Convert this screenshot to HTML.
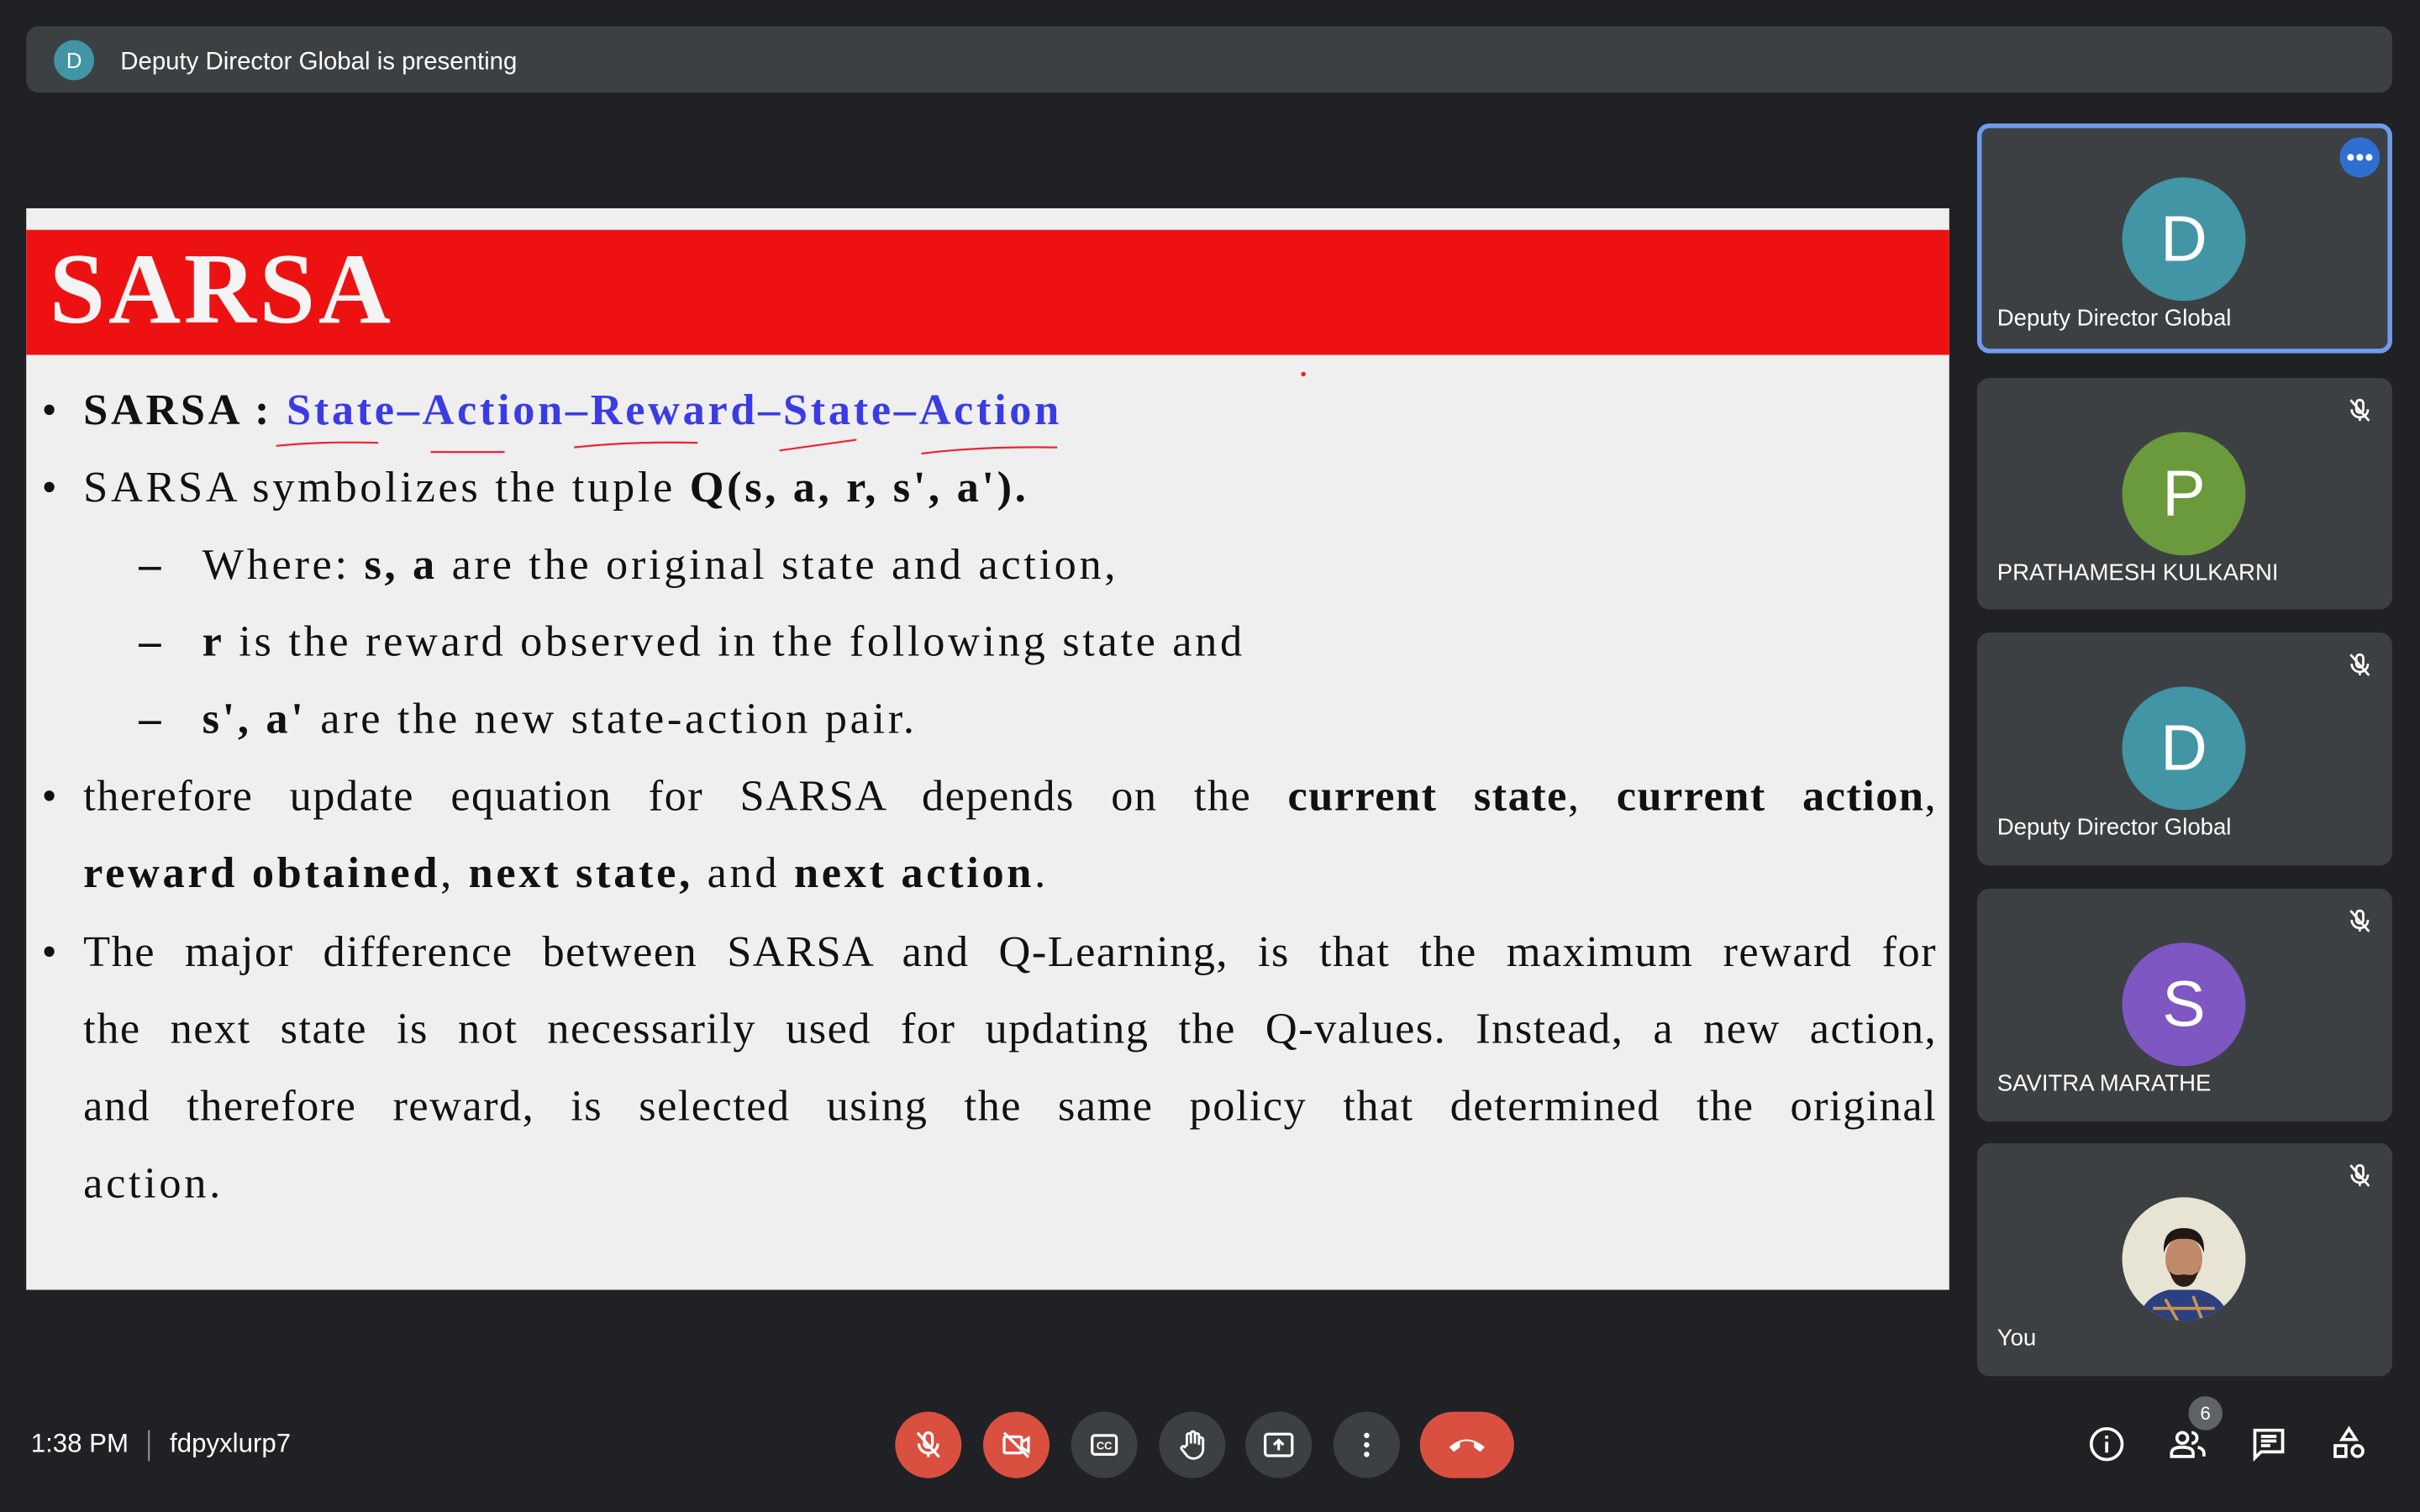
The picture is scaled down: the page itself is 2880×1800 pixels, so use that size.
<!DOCTYPE html>
<html><head><meta charset="utf-8"><style>
html,body{margin:0;padding:0;background:#202124;overflow:hidden}
#w{position:absolute;left:0;top:0;width:1568px;height:980px;transform:scale(1.836735);transform-origin:0 0;background:#202124;font-family:"Liberation Sans",sans-serif;color:#fff}
.abs{position:absolute}
.top{left:17px;top:17px;width:1533px;height:43px;background:#3c4043;border-radius:8px}
.slide{left:17px;top:135px;width:1246px;height:701px;background:#efefef}
.red{left:0;top:14px;width:1246px;height:81px;background:#ee1111}
.ttl{left:15px;top:7px;font-family:"Liberation Serif",serif;font-weight:900;font-size:65px;color:#f4f4f4;letter-spacing:2px;line-height:65px}
.ln{position:absolute;font-family:"Liberation Serif",serif;font-size:28.5px;line-height:30px;color:#111;letter-spacing:2px;white-space:nowrap}
.j{width:1201px;text-align:justify;text-align-last:justify;white-space:normal;letter-spacing:0.8px}
.bul{position:absolute;font-size:28px;line-height:30px;color:#111;font-family:"Liberation Serif",serif}
b{font-weight:900}
.tile{position:absolute;left:1281px;width:269px;background:#3c4043;border-radius:8px}
.av{position:absolute;left:94px;width:80px;height:80px;border-radius:50%;color:#fff;font-size:42px;text-align:center;line-height:80px}
.nm{position:absolute;left:13px;font-size:15px;color:#fff}
.mute{position:absolute;right:12px;top:12px}
.btn{position:absolute;top:915px;width:43px;height:43px;border-radius:50%;background:#3c4043}
.btn svg{position:absolute;left:11px;top:11px}
</style></head><body><div id="w">
<div class="abs top">
 <div class="abs" style="left:18px;top:9px;width:26px;height:26px;border-radius:50%;background:#4195a5;font-size:14px;line-height:26px;text-align:center">D</div>
 <div class="abs" style="left:61px;top:15px;font-size:16px">Deputy Director Global is presenting</div>
</div>

<div class="abs slide">
 <div class="abs red"><div class="abs ttl">SARSA</div></div>
 <div class="bul" style="left:10px;top:117px">•</div>
 <div class="ln" style="left:37px;top:117px"><b>SARSA : <span style="color:#3b3be6">State–Action–Reward–State–Action</span></b></div>
 <svg class="abs" style="left:150px;top:146px" width="540" height="16"><g stroke="#e23" stroke-width="1.2" fill="none"><path d="M12 8 Q40 5 78 6"/><path d="M112 12 L160 12"/><path d="M205 9 Q240 5 285 6"/><path d="M338 11 Q360 8 388 4"/><path d="M430 13 Q470 8 518 9"/></g></svg>
 <div class="bul" style="left:10px;top:167px">•</div>
 <div class="ln" style="left:37px;top:167px">SARSA symbolizes the tuple <b>Q(s, a, r, s', a').</b></div>
 <div class="ln" style="left:73px;top:217px"><b>–</b></div>
 <div class="ln" style="left:114px;top:217px">Where: <b>s, a</b> are the original state and action,</div>
 <div class="ln" style="left:73px;top:267px"><b>–</b></div>
 <div class="ln" style="left:114px;top:267px"><b>r</b> is the reward observed in the following state and</div>
 <div class="ln" style="left:73px;top:317px"><b>–</b></div>
 <div class="ln" style="left:114px;top:317px"><b>s', a'</b> are the new state-action pair.</div>
 <div class="bul" style="left:10px;top:367px">•</div>
 <div class="ln j" style="left:37px;top:367px">therefore update equation for SARSA depends on the <b>current state</b>, <b>current action</b>,</div>
 <div class="ln" style="left:37px;top:417px"><b>reward obtained</b>, <b>next state,</b> and <b>next action</b>.</div>
 <div class="bul" style="left:10px;top:468px">•</div>
 <div class="ln j" style="left:37px;top:468px">The major difference between SARSA and Q-Learning, is that the maximum reward for</div>
 <div class="ln j" style="left:37px;top:518px">the next state is not necessarily used for updating the Q-values. Instead, a new action,</div>
 <div class="ln j" style="left:37px;top:568px">and therefore reward, is selected using the same policy that determined the original</div>
 <div class="ln" style="left:37px;top:618px">action.</div>
 <div class="abs" style="left:826px;top:106px;width:3px;height:3px;border-radius:50%;background:#e22"></div>
</div>

<div class="tile" style="top:80px;height:149px;box-shadow:inset 0 0 0 3px #6f9cee">
 <div class="abs" style="right:8px;top:9px;width:26px;height:26px;border-radius:50%;background:#2f6fd2"><svg width="26" height="26"><circle cx="7" cy="13" r="2.2" fill="#fff"/><circle cx="13" cy="13" r="2.2" fill="#fff"/><circle cx="19" cy="13" r="2.2" fill="#fff"/></svg></div>
 <div class="av" style="top:35px;background:#4195a5">D</div>
 <div class="nm" style="top:118px">Deputy Director Global</div>
</div>
<div class="tile" style="top:245px;height:150px">
 <svg class="mute" width="18" height="18" viewBox="0 0 24 24"><g fill="none" stroke="#fff" stroke-width="2"><rect x="9" y="3" width="6" height="11" rx="3"/><path d="M5 11a7 7 0 0 0 14 0M12 18v3M4 3l16 18"/></g></svg>
 <div class="av" style="top:35px;background:#6a9a3b">P</div>
 <div class="nm" style="top:118px">PRATHAMESH KULKARNI</div>
</div>
<div class="tile" style="top:410px;height:151px">
 <svg class="mute" width="18" height="18" viewBox="0 0 24 24"><g fill="none" stroke="#fff" stroke-width="2"><rect x="9" y="3" width="6" height="11" rx="3"/><path d="M5 11a7 7 0 0 0 14 0M12 18v3M4 3l16 18"/></g></svg>
 <div class="av" style="top:35px;background:#4195a5">D</div>
 <div class="nm" style="top:118px">Deputy Director Global</div>
</div>
<div class="tile" style="top:576px;height:151px">
 <svg class="mute" width="18" height="18" viewBox="0 0 24 24"><g fill="none" stroke="#fff" stroke-width="2"><rect x="9" y="3" width="6" height="11" rx="3"/><path d="M5 11a7 7 0 0 0 14 0M12 18v3M4 3l16 18"/></g></svg>
 <div class="av" style="top:35px;background:#7e57c2">S</div>
 <div class="nm" style="top:118px">SAVITRA MARATHE</div>
</div>
<div class="tile" style="top:741px;height:151px">
 <svg class="mute" width="18" height="18" viewBox="0 0 24 24"><g fill="none" stroke="#fff" stroke-width="2"><rect x="9" y="3" width="6" height="11" rx="3"/><path d="M5 11a7 7 0 0 0 14 0M12 18v3M4 3l16 18"/></g></svg>
 <svg class="abs" style="left:94px;top:35px" width="80" height="80"><defs><clipPath id="c"><circle cx="40" cy="40" r="40"/></clipPath></defs><g clip-path="url(#c)"><rect width="80" height="80" fill="#e8e4d4"/><path d="M10 80 Q14 64 30 60 L50 60 Q66 64 70 80Z" fill="#2c3f80"/><path d="M28 66 L36 80 M46 64 L52 80 M20 72 L60 72" stroke="#c99450" stroke-width="2"/><ellipse cx="40" cy="40" rx="12" ry="15" fill="#c08a6a"/><path d="M40 50 Q30 52 30 44 Q32 58 40 58 Q48 58 50 44 Q50 52 40 50Z" fill="#2b1e18"/><path d="M27 36 Q26 20 40 20 Q54 20 53 36 Q50 26 40 27 Q30 26 27 36Z" fill="#1e1714"/></g></svg>
 <div class="nm" style="top:118px">You</div>
</div>

<div class="abs" style="left:20px;top:926px;font-size:17px">1:38 PM</div>
<div class="abs" style="left:96px;top:927px;width:1px;height:20px;background:#9aa0a6"></div>
<div class="abs" style="left:110px;top:926px;font-size:17px">fdpyxlurp7</div>

<div class="btn" style="left:580px;background:#da5040"><svg width="21" height="21" viewBox="0 0 24 24"><g fill="none" stroke="#fff" stroke-width="2"><rect x="9" y="3" width="6" height="11" rx="3"/><path d="M5 11a7 7 0 0 0 14 0M12 18v3M4 3l16 18"/></g></svg></div>
<div class="btn" style="left:637px;background:#da5040"><svg width="21" height="21" viewBox="0 0 24 24"><g fill="none" stroke="#fff" stroke-width="2"><rect x="3" y="6" width="13" height="12" rx="1"/><path d="M16 10l5-3v10l-5-3M3 3l18 18"/></g></svg></div>
<div class="btn" style="left:694px"><svg width="21" height="21" viewBox="0 0 24 24"><rect x="3" y="5" width="18" height="14" rx="2" fill="none" stroke="#fff" stroke-width="2"/><text x="12" y="15.5" font-size="8" fill="#fff" text-anchor="middle" font-family="Liberation Sans" font-weight="bold">CC</text></svg></div>
<div class="btn" style="left:751px"><svg width="21" height="21" viewBox="0 0 24 24"><path d="M8 12V5a1.5 1.5 0 0 1 3 0v6V3.5a1.5 1.5 0 0 1 3 0V11V5a1.5 1.5 0 0 1 3 0v7V8a1.5 1.5 0 0 1 3 0v7a7 7 0 0 1-12 5l-4-5a1.5 1.5 0 0 1 2.5-1.5z" fill="none" stroke="#fff" stroke-width="1.8"/></svg></div>
<div class="btn" style="left:807px"><svg width="21" height="21" viewBox="0 0 24 24"><rect x="2" y="4" width="20" height="16" rx="2" fill="none" stroke="#fff" stroke-width="2"/><path d="M12 16V9M8.5 12l3.5-3.5 3.5 3.5" fill="none" stroke="#fff" stroke-width="2"/></svg></div>
<div class="btn" style="left:864px"><svg width="21" height="21" viewBox="0 0 24 24"><circle cx="12" cy="5" r="2" fill="#fff"/><circle cx="12" cy="12" r="2" fill="#fff"/><circle cx="12" cy="19" r="2" fill="#fff"/></svg></div>
<div class="abs" style="left:920px;top:915px;width:61px;height:43px;border-radius:22px;background:#da5040"><svg class="abs" style="left:17px;top:12px" width="27" height="19" viewBox="0 0 27 19"><path d="M2 11 Q13 1 25 11 L22 14 L18 11 L18 8 Q13 6 9 8 L9 11 L5 14Z" fill="#fff"/></svg></div>

<svg class="abs" style="left:1353px;top:924px" width="24" height="24" viewBox="0 0 24 24"><circle cx="12" cy="12" r="10" fill="none" stroke="#fff" stroke-width="2"/><rect x="11" y="10.5" width="2" height="7" fill="#fff"/><rect x="11" y="6.5" width="2" height="2" fill="#fff"/></svg>
<div class="abs" style="left:1418px;top:905px;width:22px;height:22px;border-radius:50%;background:#5f6368;font-size:12px;text-align:center;line-height:22px">6</div>
<svg class="abs" style="left:1405px;top:924px" width="26" height="24" viewBox="0 0 26 24"><circle cx="9" cy="8" r="3.5" fill="none" stroke="#fff" stroke-width="2"/><path d="M2 20v-2q0-4 7-4t7 4v2z" fill="none" stroke="#fff" stroke-width="2"/><path d="M15 4.5a3.5 3.5 0 0 1 0 7M19 14q4 1 4 4v2" fill="none" stroke="#fff" stroke-width="2"/></svg>
<svg class="abs" style="left:1458px;top:924px" width="24" height="24" viewBox="0 0 24 24"><path d="M3 3h18v14H7l-4 4z" fill="none" stroke="#fff" stroke-width="2"/><path d="M7 7h10M7 10h10M7 13h6" stroke="#fff" stroke-width="2"/></svg>
<svg class="abs" style="left:1510px;top:924px" width="24" height="24" viewBox="0 0 24 24"><path d="M12 2l4.5 7h-9z" fill="none" stroke="#fff" stroke-width="2"/><rect x="3" y="13" width="7" height="7" fill="none" stroke="#fff" stroke-width="2"/><circle cx="17.5" cy="16.5" r="3.5" fill="none" stroke="#fff" stroke-width="2"/></svg>
</div></body></html>
